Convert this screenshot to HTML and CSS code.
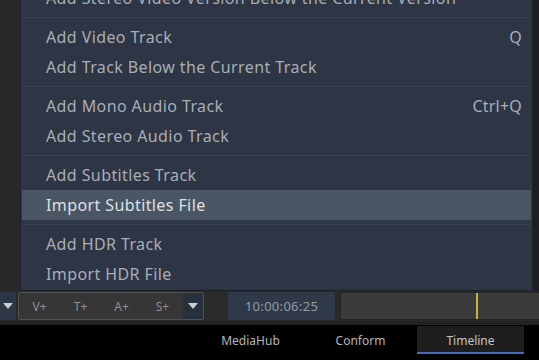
FILE: index.html
```html
<!DOCTYPE html>
<html lang="en">
<head>
  <meta charset="UTF-8" />
  <title>Timeline</title>
  <link rel="stylesheet" href="styles.css">
</head>

<body>
  <div class="workspace">
    <div class="gutter"></div>

    <div class="menu">
      <div class="item">Add Stereo Video Version Below the Current Version</div>
      <div class="sep"></div>
      <div class="item">Add Video Track <span class="key">Q</span></div>
      <div class="item">Add Track Below the Current Track</div>
      <div class="sep"></div>
      <div class="item">Add Mono Audio Track <span class="key">Ctrl+Q</span></div>
      <div class="item">Add Stereo Audio Track</div>
      <div class="sep"></div>
      <div class="item">Add Subtitles Track</div>
      <div class="item active">Import Subtitles File</div>
      <div class="sep"></div>
      <div class="item">Add HDR Track</div>
      <div class="item">Import HDR File</div>
    </div>

    <div class="edge"></div>
  </div>

  <div class="toolbar">
    <button class="drop solo"><span class="tri"></span></button>

    <div class="track-group">
      <span class="add">V+</span>
      <span class="add">T+</span>
      <span class="add">A+</span>
      <span class="add">S+</span>
      <button class="drop"><span class="tri"></span></button>
    </div>

    <div class="timecode">10:00:06:25</div>

    <div class="scrubber">
      <span class="playhead"></span>
    </div>
  </div>

  <div class="tabs">
    <div class="tab">MediaHub</div>
    <div class="tab">Conform</div>
    <div class="tab current">Timeline</div>
  </div>
</body>
</html>
```

FILE: styles.css
```css
body {
  margin: 0;
  width: 539px;
  height: 360px;
  overflow: hidden;
  background-color: #282828;
  font-family: 'Noto Sans', sans-serif;
  color: #a9aeb6;
}

.workspace {
  display: flex;
  height: 291px;
}

.gutter {
  width: 20px;
  background-color: #282828;
}

.menu {
  flex: 1;
  display: flex;
  flex-direction: column;
  justify-content: flex-end;
  overflow: hidden;
  background-color: #2e3544;
  border-left: 1px solid #1e232c;
  border-right: 1px solid #1e232c;
  border-bottom: 1px solid #1b1f27;
  padding: 0 1px 1px 1px;
}

.item {
  flex: none;
  display: flex;
  justify-content: space-between;
  align-items: center;
  height: 30px;
  padding: 0 9px 0 24px;
  font-size: 16px;
  letter-spacing: 0.4px;
  white-space: nowrap;
}

.item.active {
  background-color: #4a5664;
  color: #dde0e4;
}

.key {
  color: #a9aeb6;
  letter-spacing: 0.2px;
}

.sep {
  flex: none;
  height: 1px;
  margin: 4px 0;
  background-color: #3b4353;
}

.edge {
  width: 6px;
  background-color: #1f1f1f;
}

.toolbar {
  display: flex;
  align-items: center;
  height: 34px;
  background-color: #2a2a2a;
  border-bottom: 4px solid #232323;
  box-sizing: border-box;
}

.drop {
  display: flex;
  align-items: center;
  justify-content: center;
  width: 20px;
  height: 28px;
  padding: 0;
  border: none;
  background-color: #27303d;
}

.drop.solo {
  width: 16px;
  background-color: #2d3645;
}

.tri {
  width: 0;
  height: 0;
  border-left: 5px solid transparent;
  border-right: 5px solid transparent;
  border-top: 6px solid #c9ccd1;
}

.track-group {
  display: flex;
  align-items: center;
  height: 28px;
  margin-left: 2px;
  border: 1px solid #525252;
  border-radius: 2px;
  background-color: #363636;
  box-sizing: border-box;
}

.track-group .drop {
  height: 26px;
}

.add {
  width: 41px;
  text-align: center;
  font-size: 12px;
  color: #8f8f8f;
}

.timecode {
  width: 107px;
  height: 28px;
  margin-left: 24px;
  border-radius: 2px;
  background-color: #2f3947;
  color: #929aa5;
  font-size: 13px;
  letter-spacing: 0.3px;
  line-height: 28px;
  text-align: center;
}

.scrubber {
  position: relative;
  flex: 1;
  height: 26px;
  margin-left: 5px;
  border: 1px solid #242424;
  border-right: none;
  border-radius: 2px 0 0 2px;
  background-color: #3b3b3b;
}

.playhead {
  position: absolute;
  left: 135px;
  top: 0;
  width: 2px;
  height: 26px;
  background-color: #c8b23a;
}

.tabs {
  display: flex;
  gap: 3px;
  height: 35px;
  padding-left: 197px;
  background-color: #000;
}

.tab {
  width: 107px;
  height: 26px;
  margin-top: 1px;
  font-size: 12px;
  line-height: 30px;
  text-align: center;
  color: #b5b5b5;
}

.tab.current {
  background-color: #1e1e1e;
  border-bottom: 2px solid #3f6db6;
  color: #c4c4c4;
}
```
